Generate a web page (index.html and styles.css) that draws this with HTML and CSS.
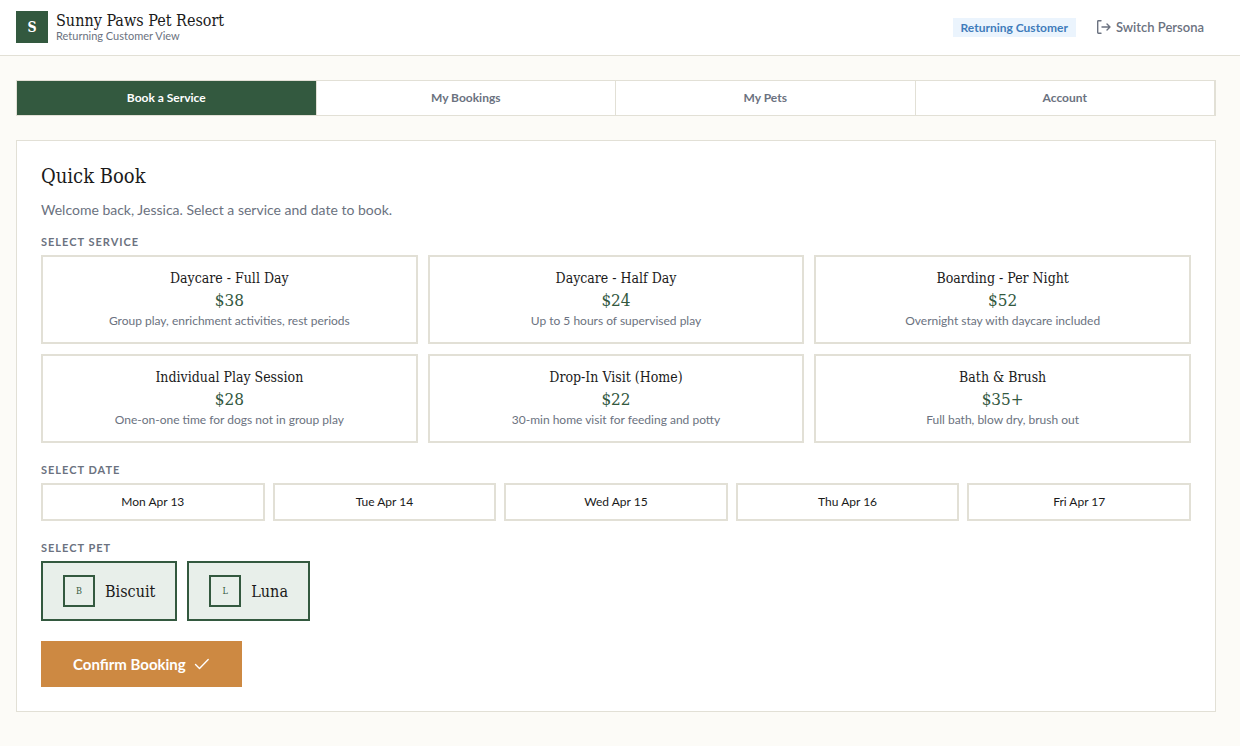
FILE: index.html
```
<!doctype html>
<html lang="en">
<head>
<meta charset="utf-8">
<meta name="viewport" content="width=device-width, initial-scale=1">
<title>Sunny Paws Pet Resort</title>
<link rel="stylesheet" href="styles.css">
</head>
<body>
<header class="topbar">
	<div class="brand">
		<div class="logo">S</div>
		<div>
			<div class="brand-name">Sunny Paws Pet Resort</div>
			<div class="brand-sub">Returning Customer View</div>
		</div>
	</div>
	<div class="topbar-right">
		<span class="badge">Returning Customer</span>
		<button type="button" class="switch">
			<svg width="16" height="16" viewBox="0 0 16 16" fill="none" stroke="currentColor" stroke-width="1.4" stroke-linecap="round" stroke-linejoin="round"><path d="M5 1.7H2.4a.7.7 0 0 0-.7.7v11.2c0 .4.3.7.7.7H5M6 8h8M11 5l3 3-3 3"/></svg>
			Switch Persona
		</button>
	</div>
</header>

<main class="page">
	<nav class="tabs">
		<button type="button" class="tab active">Book a Service</button>
		<button type="button" class="tab">My Bookings</button>
		<button type="button" class="tab">My Pets</button>
		<button type="button" class="tab">Account</button>
	</nav>

	<section class="panel">
		<h2>Quick Book</h2>
		<p class="intro">Welcome back, Jessica. Select a service and date to book.</p>

		<h3 class="label" id="label-service">Select Service</h3>
		<div class="services" role="group" aria-labelledby="label-service">
			<button type="button" class="service">
				<span class="service-name">Daycare - Full Day</span>
				<span class="price">$38</span>
				<span class="desc">Group play, enrichment activities, rest periods</span>
			</button>
			<button type="button" class="service">
				<span class="service-name">Daycare - Half Day</span>
				<span class="price">$24</span>
				<span class="desc">Up to 5 hours of supervised play</span>
			</button>
			<button type="button" class="service">
				<span class="service-name">Boarding - Per Night</span>
				<span class="price">$52</span>
				<span class="desc">Overnight stay with daycare included</span>
			</button>
			<button type="button" class="service">
				<span class="service-name">Individual Play Session</span>
				<span class="price">$28</span>
				<span class="desc">One-on-one time for dogs not in group play</span>
			</button>
			<button type="button" class="service">
				<span class="service-name">Drop-In Visit (Home)</span>
				<span class="price">$22</span>
				<span class="desc">30-min home visit for feeding and potty</span>
			</button>
			<button type="button" class="service">
				<span class="service-name">Bath &amp; Brush</span>
				<span class="price">$35+</span>
				<span class="desc">Full bath, blow dry, brush out</span>
			</button>
		</div>

		<h3 class="label" id="label-date">Select Date</h3>
		<div class="dates" role="group" aria-labelledby="label-date">
			<button type="button" class="date">Mon Apr 13</button>
			<button type="button" class="date">Tue Apr 14</button>
			<button type="button" class="date">Wed Apr 15</button>
			<button type="button" class="date">Thu Apr 16</button>
			<button type="button" class="date">Fri Apr 17</button>
		</div>

		<h3 class="label" id="label-pet">Select Pet</h3>
		<div class="pets" role="group" aria-labelledby="label-pet">
			<button type="button" class="pet" aria-pressed="true"><span class="initial">B</span>Biscuit</button>
			<button type="button" class="pet" aria-pressed="true"><span class="initial">L</span>Luna</button>
		</div>

		<button type="button" class="confirm">
			Confirm Booking
			<svg width="16" height="16" viewBox="0 0 16 16" fill="none" stroke="currentColor" stroke-width="1.4" stroke-linecap="round" stroke-linejoin="round"><path d="M1.5 8.5 5.5 12.5 14.2 3.5"/></svg>
		</button>
	</section>
</main>
</body>
</html>
```
FILE: styles.css
```
* {
	box-sizing: border-box;
}
body {
	margin: 0;
	background: #fcfbf7;
	color: #1a1a1a;
	font-family: Lato, "Open Sans", sans-serif;
	font-size: 14px;
}
h2, h3, p {
	margin: 0;
}
button {
	margin: 0;
	padding: 0;
	border: 0;
	background: none;
	color: inherit;
	font: inherit;
	cursor: pointer;
}
.logo, .brand-name, h2, .service-name, .price, .pet {
	font-family: "DejaVu Serif Condensed", "DejaVu Serif", serif;
}

/* header */
.topbar {
	display: flex;
	justify-content: space-between;
	align-items: center;
	padding: 11px 24px 12px 16px;
	background: #fff;
	border-bottom: 1px solid #e2e0d6;
}
.brand {
	display: flex;
	align-items: center;
	gap: 8px;
}
.logo {
	width: 32px;
	height: 32px;
	line-height: 32px;
	text-align: center;
	font-size: 14px;
	font-weight: bold;
	color: #fff;
	background: #33593f;
}
.brand-name {
	font-size: 16px;
	line-height: 18px;
}
.brand-sub {
	font-size: 11px;
	line-height: 12px;
	color: #6b7280;
}
.topbar-right {
	display: flex;
	align-items: center;
	gap: 8px;
}
.badge {
	padding: 0 8px;
	font-size: 12px;
	line-height: 19px;
	font-weight: bold;
	color: #3f7cbb;
	background: #ebf4fd;
}
.switch {
	display: flex;
	align-items: center;
	gap: 4px;
	padding: 0 12px;
	font-size: 13px;
	line-height: 18px;
	font-weight: 600;
	color: #6b7280;
}

/* tabs */
.page {
	padding: 24px 24px 34px 16px;
}
.tabs {
	display: flex;
	margin-bottom: 24px;
	background: #fff;
	border: 1px solid #e2e0d6;
}
.tab {
	flex: 1;
	font-size: 12px;
	line-height: 34px;
	font-weight: bold;
	color: #6b7280;
	border-right: 1px solid #e2e0d6;
}
.tab.active {
	color: #fff;
	background: #33593f;
}

/* booking panel */
.panel {
	padding: 24px;
	background: #fff;
	border: 1px solid #e2e0d6;
}
h2 {
	font-size: 20px;
	line-height: 22px;
	font-weight: normal;
}
.intro {
	margin: 12px 0;
	line-height: 22px;
	color: #6b7280;
}
.label {
	margin-bottom: 4px;
	font-size: 11px;
	line-height: 18px;
	font-weight: bold;
	letter-spacing: 1px;
	text-transform: uppercase;
	color: #6b7280;
}
.services {
	display: grid;
	grid-template-columns: repeat(3, 1fr);
	gap: 10px;
	margin-bottom: 18px;
}
.service {
	display: flex;
	flex-direction: column;
	align-items: center;
	padding: 12px;
	border: 2px solid #e2e0d6;
}
.service-name {
	font-size: 14px;
	line-height: 19px;
}
.price {
	font-size: 17px;
	line-height: 24px;
	color: #33593f;
}
.desc {
	font-size: 12px;
	line-height: 18px;
	color: #6b7280;
}
.dates {
	display: grid;
	grid-template-columns: repeat(5, 1fr);
	gap: 8px;
	margin-bottom: 18px;
}
.date {
	font-size: 12px;
	line-height: 34px;
	border: 2px solid #e2e0d6;
}
.pets {
	display: flex;
	flex-wrap: wrap;
	gap: 10px;
	margin-bottom: 20px;
}
.pet {
	display: flex;
	align-items: center;
	gap: 10px;
	padding: 12px 20px;
	font-size: 16px;
	border: 2px solid #33593f;
	background: #e8efea;
}
.initial {
	width: 32px;
	height: 32px;
	line-height: 28px;
	text-align: center;
	font-size: 9px;
	color: #33593f;
	border: 2px solid #33593f;
}
.confirm {
	display: flex;
	align-items: center;
	gap: 8px;
	padding: 0 32px;
	font-size: 15px;
	line-height: 46px;
	font-weight: bold;
	color: #fff;
	background: #cd8942;
}
```
